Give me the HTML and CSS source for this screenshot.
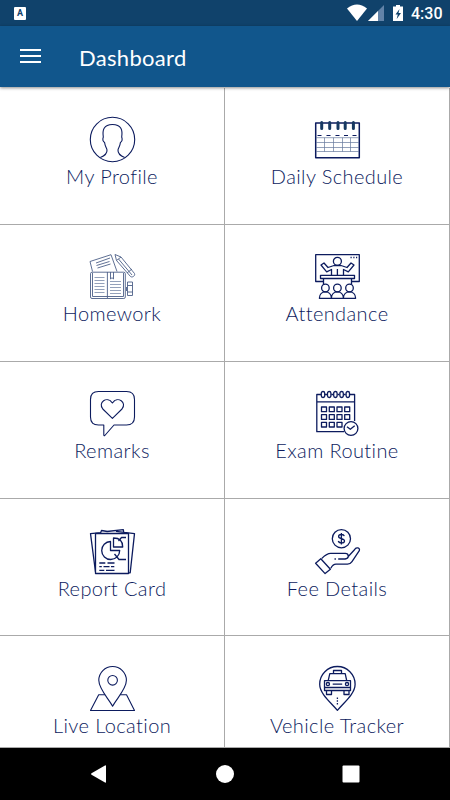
FILE: index.html
```html
<!DOCTYPE html>
<html lang="en">
<head>
  <meta charset="UTF-8" />
  <meta name="viewport" content="width=device-width, initial-scale=1.0"/>
  <title>Dashboard</title>
  <link rel="stylesheet" href="styles.css">
</head>
<body>
  <div class="status-bar">
    <span class="app-badge">A</span>
    <svg class="status-icons" width="57" height="18" viewBox="0 0 57 18">
      <path fill="#fff" d="M0 4.500Q10-3.500 20 4.500L10 17z"/>
      <path fill="#6283a8" d="M37 1v16H21z"/>
      <path fill="#fff" d="M31 7v10H21z"/>
      <path fill="#fff" d="M49 1h4v1.500h3V17H46V2.500h3z"/>
      <path fill="#10426b" d="M52.500 5l-4 5.500h2.300L49.700 15l4.300-6h-2.500z"/>
    </svg>
    <span class="clock">4:30</span>
  </div>

  <header class="toolbar">
    <div class="menu"><i></i><i></i><i></i></div>
    <h1>Dashboard</h1>
  </header>

  <main class="grid">
    <div class="cell">
      <svg viewBox="0 0 45 45">
        <circle cx="22.500" cy="22.500" r="22.200"/>
        <path d="M10.300 40.500c5-2 7-4 6.700-7.500-.2-2.300-2-3.300-2.400-7.500-1.600-1-2-3.500-1.300-5.500-1-6.500.2-12.500 9.200-12.500s10.200 6 9.200 12.500c.7 2 .3 4.500-1.300 5.500-.4 4.200-2.200 5.200-2.400 7.500-.3 3.500 1.700 5.500 6.700 7.500"/>
      </svg>
      <span class="label">My Profile</span>
    </div>
    <div class="cell">
      <svg viewBox="0 0 45 45">
        <path class="bold" d="M.7 6h43.600v34.700H.7z"/>
        <path class="rings" d="M6.700 5.500v6M14.700 5.500v6M23 5.500v6M30.200 5.500v6M38.400 5.500v6"/>
        <path d="M2.500 18.500h4M11.500 18.500h4M20.500 18.500h4M29 18.500h4M37.500 18.500h4"/>
        <path class="fine" d="M1 20.700h43M1 25.500h43M1 30.500h43M1 34.500h43M9.500 20.700v14M18.500 20.700v14M27.500 20.700v14M35.500 20.700v14"/>
      </svg>
      <span class="label">Daily Schedule</span>
    </div>
    <div class="cell">
      <svg class="soft" viewBox="0 0 45 45">
        <path d="M2.500 17.500L0 7.500 21 .7l6 16.800M6 9l14-5M6.500 11.500l13-4M7.500 14l13-4"/>
        <path d="M25 .5l6 2.500 13.500 16.500c1 2-2 4.500-4 3L26.500 6.500zM26.500 6.500L31 3M28.500 5L42 21M37 19l5-4"/>
        <rect x=".5" y="18.200" width="34.800" height="26.300" rx="1.500"/>
        <path d="M2.500 19v23.500h31V19M17.400 18v26M20.500 18v7l1.500-1.300 1.500 1.300v-7"/>
        <path class="fine" d="M4.500 23.500h10M4.500 26.500h10M4.500 29.500h10M4.500 32.500h10M4.500 35.500h10M4.500 38.500h10M20 27.500h11M20 30.500h11M20 33.500h11M20 36.500h11M20 39.500h11"/>
        <path d="M37.500 28h5v13.500h-5zM37.500 31.500h5M37.500 38h5M36.500 33v4"/>
      </svg>
      <span class="label">Homework</span>
    </div>
    <div class="cell">
      <svg class="solid" viewBox="0 0 45 45">
        <path d="M8.500 27.500H.7V.7h43.600v26.800h-7.800"/>
        <circle cx="22.400" cy="7.300" r="4"/>
        <path d="M16.500 21v-5.500l-4.800 2.300L6 11l3-2 4 4.500 6-2h7l6 2 4-4.500 3 2-5.700 6.800-4.800-2.300V21M22.400 15v6"/>
        <path d="M5.500 21.300h34v3.200h-34zM8.500 24.500v6M36.500 24.500v6M31 24.500h1.500"/>
        <circle cx="10.400" cy="34" r="3.800"/><circle cx="22.400" cy="34" r="3.800"/><circle cx="34.500" cy="34" r="3.800"/>
        <path d="M4.400 44.300c0-8.600 12-8.600 12 0c0-8.600 12-8.600 12 0c0-8.600 12.200-8.600 12.200 0zM35.500 3.500h1.200M38.300 3.500h1.200M41 3.500h1.200"/>
      </svg>
      <span class="label">Attendance</span>
    </div>
    <div class="cell">
      <svg viewBox="0 0 45 45">
        <path d="M8.500.5h28q8 0 8 8V26q0 8-8 8H24L14.800 44.500q-1 .7-1-1V34H8.500q-8 0-8-8V8.500q0-8 8-8z"/>
        <path d="M22.400 27.300L12.800 18C7.500 11.500 17 4.500 22.400 12c5.400-7.500 14.900-.5 9.600 6z"/>
      </svg>
      <span class="label">Remarks</span>
    </div>
    <div class="cell">
      <svg class="solid" viewBox="0 0 45 45">
        <path d="M29 40.700H1.800V3.500H6M10 3.500h2.300M16.300 3.500h2M22.500 3.500h2M28.700 3.500h2M35 3.500h4.600V30M1.800 10.800h37.800"/>
        <rect x="6.300" y=".5" width="3.400" height="6" rx="1.700"/><rect x="12.500" y=".5" width="3.400" height="6" rx="1.700"/><rect x="18.700" y=".5" width="3.400" height="6" rx="1.700"/><rect x="24.900" y=".5" width="3.400" height="6" rx="1.700"/><rect x="31.100" y=".5" width="3.400" height="6" rx="1.700"/>
        <path d="M6.500 16h5v4.700h-5zM14.300 16h5v4.700h-5zM22 16h5v4.700h-5zM29.700 16h5v4.700h-5zM6.500 23.700h5v4.700h-5zM14.300 23.700h5v4.700h-5zM22 23.700h5v4.700h-5zM29.700 23.700h5v4.700h-5zM6.500 31.300h5V36h-5zM14.300 31.300h5V36h-5zM22 31.300h5V36h-5z"/>
        <circle class="fill" cx="36" cy="37.500" r="6.900"/>
        <path d="M32 35.700l3.300 2.600 4.400-3.500"/>
      </svg>
      <span class="label">Exam Routine</span>
    </div>
    <div class="cell">
      <svg class="solid" viewBox="0 0 45 45">
        <path d="M5.500 43L.5 4.600l10.500-1M10.500 4l1-2.500 6 1M17 2.500L33.300.7l.5 3M26 2.300l18.500 2.300-4.300 39.200h-2"/>
        <path class="fill" d="M5.500 4.500h33v40h-33z"/>
        <path d="M20.500 12.500a9 9 0 1 0 9.200 9h-9.200zM23.500 9v9h9.200q0-9-9.200-9zM28.500 12l3-3.500H36M24.500 25l4.500 5.500h7"/>
        <path d="M9.300 34h6M17.500 34h7M9.300 37.700h2.500M13.500 37.700h6M21 37.700h3.300M9.300 41.300h5M16 41.300h8.500"/>
      </svg>
      <span class="label">Report Card</span>
    </div>
    <div class="cell">
      <svg class="solid" viewBox="0 0 45 45">
        <circle cx="26.400" cy="9.700" r="9.100"/>
        <path d="M29.300 7.200c-.6-2.400-5.700-2.200-5.700.2 0 2.800 5.900 1.600 5.900 4.600 0 2.500-5.500 2.700-6.200 0M26.400 4v11.500"/>
        <path d="M.6 34.200l5.200-4.500 9.600 10.600-5.300 4.300z"/>
        <path d="M6.700 29.500c3-3 5-5.200 9-5.200h14.500c4 0 4.300 5.700 0 5.700h-7M33.500 27.200l6-6.500c1.500-3.300 6-1.800 4.800 1L37 32.700q-1.700 2.500-4.500 2.500H21q-3 0-5.200 4M33.500 27.200q-1 2.600-3.500 2.800M19.500 30h1.400"/>
      </svg>
      <span class="label">Fee Details</span>
    </div>
    <div class="cell">
      <svg viewBox="0 0 45 45">
        <path d="M22.600 40.200C18.500 32.500 8.800 23 8.800 14.300a13.800 13.800 0 0 1 27.600 0C36.400 23 26.700 32.500 22.600 40.200z"/>
        <circle cx="22.600" cy="14.300" r="4.800"/>
        <path d="M15 28.700H8.700L.5 44.500h44l-8-15.800h-6.300"/>
      </svg>
      <span class="label">Live Location</span>
    </div>
    <div class="cell">
      <svg class="solid" viewBox="0 0 45 45">
        <path d="M22.400 44.300C16.500 37 4.700 28 4.700 18.200a17.700 17.700 0 0 1 35.400 0C40.100 28 28.300 37 22.400 44.300z"/>
        <path d="M18.500 7.500v-3h8v3M14.800 7.600h15.400l1.500 7H13.200zM9.500 14.700h26v9.800h-26zM9.500 21.500h26M17.700 18.200h9.500M11.500 24.700v3.800h5v-3.800M29 24.700v3.800h5v-3.800"/>
        <circle cx="12.900" cy="18.100" r="1.600"/><circle cx="32" cy="18.100" r="1.600"/>
        <path class="road" d="M22.400 31.500v7"/>
      </svg>
      <span class="label">Vehicle Tracker</span>
    </div>
  </main>

  <nav class="nav-bar">
    <svg width="18" height="18" viewBox="0 0 18 18"><path d="M1.500 8.200L15 .4q1-.4 1 .6v16q0 1-1 .6L1.500 9.800q-1-.8 0-1.600z"/></svg>
    <svg width="18" height="18" viewBox="0 0 18 18"><circle cx="9" cy="9" r="9"/></svg>
    <svg width="18" height="18" viewBox="0 0 18 18"><rect x=".5" y=".5" width="17" height="17" rx="1"/></svg>
  </nav>
</body>
</html>
```
FILE: styles.css
```css
* {
  box-sizing: border-box;
}
body {
  margin: 0;
  height: 800px;
  display: flex;
  flex-direction: column;
  overflow: hidden;
  background: white;
  color: #0c1b5e;
  font-family: Lato, sans-serif;
  font-variant-ligatures: none;
}
.status-bar {
  flex: none;
  height: 26px;
  display: flex;
  align-items: center;
  padding: 0 8px 0 14px;
  background: #10426b;
  color: white;
}
.app-badge {
  width: 12px;
  height: 13px;
  border-radius: 1px;
  background: white;
  color: #10426b;
  font: bold 9px/13px Roboto, sans-serif;
  text-align: center;
}
.status-icons {
  margin: 0 7px 0 auto;
}
.clock {
  width: 31px;
  font: 500 16px/26px Roboto, sans-serif;
  padding-top: 1px;
  white-space: nowrap;
}
.toolbar {
  flex: none;
  height: 61px;
  display: flex;
  align-items: center;
  padding: 0 0 1px 20px;
  background: #11568c;
  color: white;
  box-shadow: 0 1px 3px rgba(0, 0, 0, 0.45);
  z-index: 1;
}
.menu {
  width: 21px;
  height: 14px;
  display: flex;
  flex-direction: column;
  justify-content: space-between;
}
.menu i {
  height: 2px;
  background: white;
}
.toolbar h1 {
  margin: 3px 0 0 38px;
  font-size: 22px;
  font-weight: 400;
  letter-spacing: 0.3px;
}
.grid {
  flex: 1;
  min-height: 0;
  display: grid;
  grid-template-columns: 225px 225px;
  grid-auto-rows: 137.200px;
  padding-top: 0.500px;
  overflow: hidden;
  border-bottom: 1px solid #aaa;
}
.cell {
  display: flex;
  flex-direction: column;
  align-items: center;
  padding-top: 29.500px;
  border-right: 1px solid #aaa;
  border-bottom: 1px solid #aaa;
}
.cell svg {
  flex: none;
  width: 45px;
  height: 45px;
  overflow: visible;
  fill: none;
  stroke: #0c1b5e;
  stroke-width: 1.100;
  stroke-linejoin: round;
}
.cell svg.solid {
  stroke-width: 1.300;
}
.cell svg.soft {
  stroke: #4d6088;
  stroke-width: 0.900;
}
.cell .bold {
  stroke-width: 1.500;
}
.cell .rings {
  stroke: #173961;
  stroke-width: 3;
  stroke-linecap: round;
}
.cell .fine {
  stroke: #66799c;
  stroke-width: 0.700;
}
.cell .fill {
  fill: white;
}
.cell .road {
  stroke-dasharray: 1.500 1.200;
}
.label {
  font-size: 20px;
  font-weight: 300;
  line-height: 29px;
  letter-spacing: 0.4px;
  white-space: nowrap;
}
.nav-bar {
  flex: none;
  height: 52px;
  display: flex;
  align-items: center;
  justify-content: space-between;
  padding: 0 90px 0 90px;
  background: black;
}
.nav-bar svg {
  fill: white;
}
```
